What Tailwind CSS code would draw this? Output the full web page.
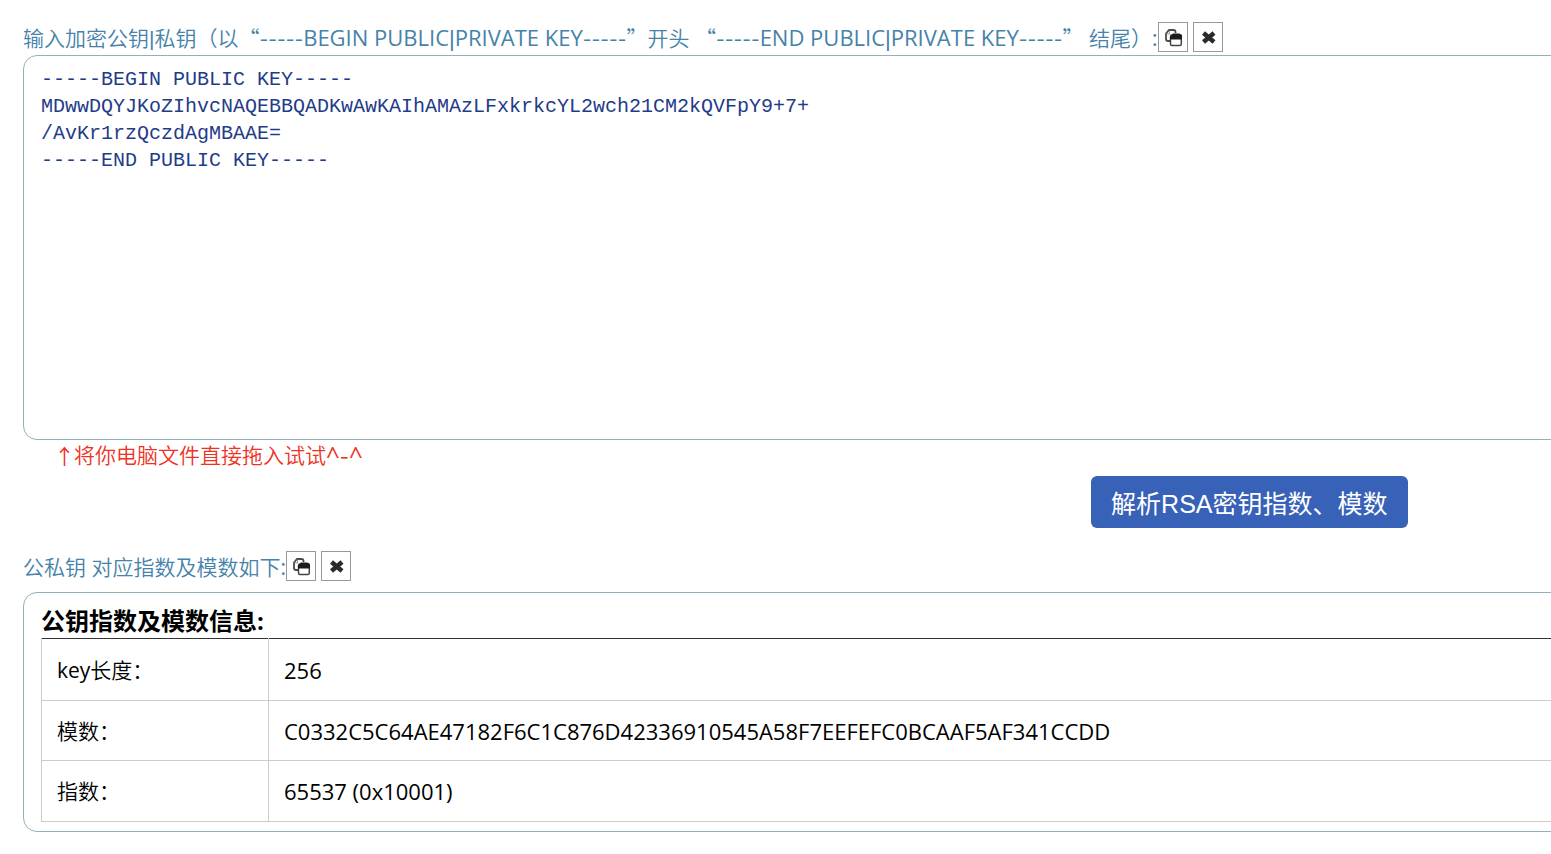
<!DOCTYPE html>
<html lang="zh-CN">
<head>
<meta charset="utf-8">
<title>RSA密钥指数、模数解析</title>
<script src="https://cdn.jsdelivr.net/npm/@tailwindcss/browser@4"></script>
</head>
<body class="bg-white font-['Open_Sans','Noto_Sans_CJK_SC',sans-serif] text-[21px] leading-7 text-black">
<svg class="hidden" aria-hidden="true">
  <symbol id="copy" viewBox="0 0 20 20">
    <path d="M7 14H5Q3 14 3 12V6.500L6 3H10.500Q12.500 3 12.500 5V6" fill="none" stroke="#4a4a4a" stroke-width="1.800"/>
    <path d="M3.500 7H6.500V3.500" fill="none" stroke="#999" stroke-width="1"/>
    <rect x="7.500" y="8" width="10.800" height="10.500" rx="1.500" fill="#fff" stroke="#444" stroke-width="1.500"/>
    <path d="M7 12.500V9.500L10 6.500H16Q19 7 19 9.500V12.500Z" fill="#1c1c1c"/>
  </symbol>
  <symbol id="close" viewBox="0 0 20 20">
    <path d="M5.500 6L16 15M16 6L5.500 15" stroke="#2b2b2b" stroke-width="4.500"/>
  </symbol>
</svg>
<div class="overflow-x-hidden">
<main class="w-[160%] pl-[23px] pr-1.5 pt-[22px]">
  <div class="flex h-[33px] items-start whitespace-pre text-[#4682a9]">
    <label for="key" class="pt-px"><span class="font-[350]">输入加密公钥</span><span class="font-['Liberation_Sans',sans-serif]">|</span><span class="font-['Noto_Sans_CJK_SC',sans-serif] font-[350]">私钥（以“</span><span class="font-['Inter',sans-serif] text-[19px]">-----</span><span class="text-[22px]">BEGIN PUBLIC<span class="font-['Liberation_Sans',sans-serif]">|</span>PRIVATE KEY</span><span class="font-['Inter',sans-serif] text-[19px]">-----</span><span class="font-['Noto_Sans_CJK_SC',sans-serif] font-[350]">”开头</span> <span class="font-['Noto_Sans_CJK_SC',sans-serif] font-[350]">“</span><span class="font-['Inter',sans-serif] text-[19px]">-----</span><span class="text-[22px]">END PUBLIC<span class="font-['Liberation_Sans',sans-serif]">|</span>PRIVATE KEY</span><span class="font-['Inter',sans-serif] text-[19px]">-----</span><span class="font-['Noto_Sans_CJK_SC',sans-serif] font-[350]">”</span> <span class="font-[350]">结尾）</span>:</label>
    <div class="flex gap-[5px]">
      <button type="button" aria-label="复制" class="flex size-[30px] items-center justify-center border border-[#999] bg-white"><svg class="size-5"><use href="#copy"/></svg></button>
      <button type="button" aria-label="清空" class="flex size-[30px] items-center justify-center border border-[#999] bg-white"><svg class="size-5"><use href="#close"/></svg></button>
    </div>
  </div>
  <textarea id="key" spellcheck="false" class="block h-[385px] w-full resize-none rounded-[14px] border border-[#92b0b8] bg-white px-[17px] py-[10px] font-['Liberation_Mono',monospace] text-[20px] leading-[27px] text-[#1f3c88] outline-none">-----BEGIN PUBLIC KEY-----
MDwwDQYJKoZIhvcNAQEBBQADKwAwKAIhAMAzLFxkrkcYL2wch21CM2kQVFpY9+7+
/AvKr1rzQczdAgMBAAE=
-----END PUBLIC KEY-----</textarea>
  <p class="flex h-9 pl-[31px] pt-px text-[#ee3224]"><span class="w-5 text-center font-['Noto_Sans_CJK_SC',sans-serif]">↑</span><span class="font-[350]">将你电脑文件直接拖入试试</span><span class="text-[24px]">^<span class="font-['Inter',sans-serif] text-[20px]">-</span>^</span></p>
  <div class="flex justify-center">
    <button type="button" class="rounded-md bg-[#3862b7] px-5 pb-1.5 pt-2.5 font-['Liberation_Sans','Noto_Sans_CJK_SC',sans-serif] text-[25px] leading-9 text-white">解析RSA密钥指数、模数</button>
  </div>
  <div class="mt-[23px] flex h-[41px] items-start text-[#4682a9]">
    <h2 class="pt-0.5"><span class="font-[350]">公私钥 对应指数及模数如下</span>:</h2>
    <div class="flex gap-[5px]">
      <button type="button" aria-label="复制结果" class="flex size-[30px] items-center justify-center border border-[#999] bg-white"><svg class="size-5"><use href="#copy"/></svg></button>
      <button type="button" aria-label="清空结果" class="flex size-[30px] items-center justify-center border border-[#999] bg-white"><svg class="size-5"><use href="#close"/></svg></button>
    </div>
  </div>
  <section class="rounded-[14px] border border-[#92b0b8] px-[17px] pb-[9px] pt-[11px]">
    <h3 class="text-[24px] font-bold leading-[34px]">公钥指数及模数信息:</h3>
    <table class="w-full table-fixed border-collapse text-left">
      <colgroup><col class="w-[227px]"><col></colgroup>
      <tbody>
        <tr class="h-[62px] border-t border-t-[#333]"><th scope="row" class="border-x border-b border-[#ccc] px-[15px] font-normal">key<span class="font-[350]">长度：</span></th><td class="border-x border-b border-[#ccc] px-[15px] text-[22px]">256</td></tr>
        <tr class="h-[60px]"><th scope="row" class="border border-[#ccc] px-[15px] font-[350]">模数：</th><td class="border border-[#ccc] px-[15px] text-[22px]">C0332C5C64AE47182F6C1C876D42336910545A58F7EEFEFC0BCAAF5AF341CCDD</td></tr>
        <tr class="h-[61px]"><th scope="row" class="border border-[#ccc] px-[15px] font-[350]">指数：</th><td class="border border-[#ccc] px-[15px] text-[22px]">65537 (0x10001)</td></tr>
      </tbody>
    </table>
  </section>
</main>
</div>
</body>
</html>
